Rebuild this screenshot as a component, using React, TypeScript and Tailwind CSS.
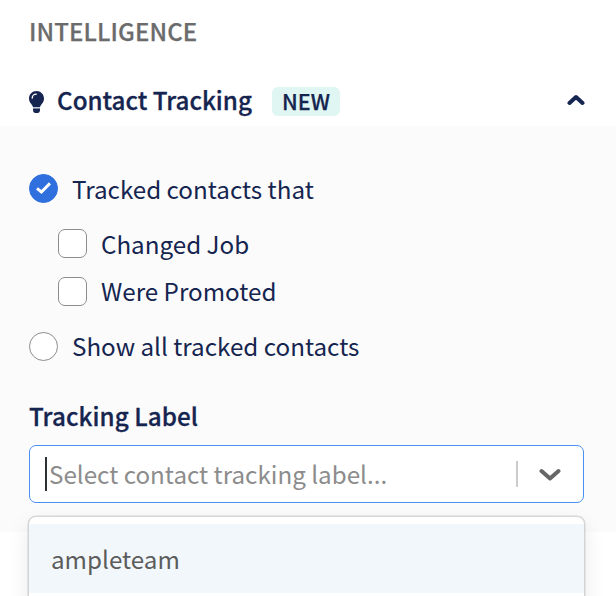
import { useState } from 'react';

interface OptionProps {
  label: string;
  shape: 'circle' | 'square';
  checked: boolean;
  onClick: () => void;
  labelClass?: string;
}

function Option({ label, shape, checked, onClick, labelClass = '' }: OptionProps) {
  return (
    <button onClick={onClick} className="flex h-[29px] items-center gap-3.5 text-left">
      <span
        className={`flex size-[29px] shrink-0 items-center justify-center border ${
          shape === 'circle' ? 'rounded-full' : 'rounded-[7px]'
        } ${checked ? 'border-[#2f6fde] bg-[#2f6fde]' : 'border-[#8c8c8c] bg-white'}`}
      >
        {checked && (
          <svg width="15" height="13" viewBox="0 0 15 13" fill="none">
            <path d="M1 6.4L5.4 10L14 1.4" stroke="white" strokeWidth="3" />
          </svg>
        )}
      </span>
      <span className={`whitespace-nowrap ${labelClass}`}>{label}</span>
    </button>
  );
}

function BulbIcon() {
  return (
    <svg width="15" height="22" viewBox="0 0 15 22" fill="none">
      <path
        d="M7.5 0C3.3 0 0 3.3 0 7.4C0 9.4.7 11 1.9 12.4C2.8 13.5 3.6 14.6 4 16H11C11.4 14.6 12.2 13.5 13.1 12.4C14.3 11 15 9.4 15 7.4C15 3.3 11.7 0 7.5 0Z"
        fill="#152550"
      />
      <path d="M3.2 7.2C3.2 4.9 5 3.2 7.3 3.2" stroke="white" strokeWidth="1.3" strokeLinecap="round" />
      <path d="M4 16H11V17.6H4Z" fill="#c3c9d8" />
      <path d="M4 17.6H11V19C11 20.7 10 22 8.6 22H6.4C5 22 4 20.7 4 19Z" fill="#152550" />
    </svg>
  );
}

export default function App() {
  const [mode, setMode] = useState('filtered');
  const [changedJob, setChangedJob] = useState(false);
  const [promoted, setPromoted] = useState(false);

  return (
    <div className="h-[596px] w-[616px] overflow-hidden bg-white font-['Noto_Sans_CJK_SC',sans-serif] text-[24.2px] leading-[29px] text-[#152550]">
      <header className="flex h-[126px] flex-col pr-[31px] pl-[29px]">
        <h2 className="mt-4 text-[24px] leading-[29px] font-medium tracking-[0.1px] text-[#6b6b6b] [-webkit-text-stroke:0.25px]">
          INTELLIGENCE
        </h2>
        <div className="mt-[42px] flex h-[29px] items-center">
          <BulbIcon />
          <h3 className="ml-[13px] w-[215px] pb-1 font-medium whitespace-nowrap [-webkit-text-stroke:0.3px]">
            Contact Tracking
          </h3>
          <span className="flex h-[29px] w-[68px] items-center justify-center rounded-md bg-[#e0f6f2] pb-[3px] text-[21.5px] font-medium [-webkit-text-stroke:0.25px]">
            NEW
          </span>
          <svg className="mb-1 ml-auto" width="18" height="12" viewBox="0 0 18 12" fill="none">
            <path d="M2.5 9L9 3L15.5 9" stroke="#152550" strokeWidth="4" strokeLinecap="round" strokeLinejoin="round" />
          </svg>
        </div>
      </header>

      <section className="h-[406px] bg-[#fbfbfb] px-[29px] pt-12">
        <Option
          label="Tracked contacts that"
          shape="circle"
          checked={mode === 'filtered'}
          onClick={() => setMode('filtered')}
        />
        <div className="mt-[26px] ml-[29px] flex flex-col gap-[19px]">
          <Option
            label="Changed Job"
            shape="square"
            checked={changedJob}
            onClick={() => setChangedJob(!changedJob)}
          />
          <Option
            label="Were Promoted"
            shape="square"
            checked={promoted}
            onClick={() => setPromoted(!promoted)}
            labelClass="pb-0.5"
          />
        </div>
        <div className="mt-[26px]">
          <Option
            label="Show all tracked contacts"
            shape="circle"
            checked={mode === 'all'}
            onClick={() => setMode('all')}
            labelClass="pb-0.5"
          />
        </div>

        <h4 className="mt-10 font-medium tracking-[0.07px] [-webkit-text-stroke:0.3px]">Tracking Label</h4>
        <div className="relative mt-[15px] w-[555px]">
          <div className="flex h-[58px] items-center rounded-[7px] border border-[#4a90ee] bg-white pl-[15px]">
            <span className="h-[34px] w-0.5 bg-[#2b2f36]" />
            <span className="ml-0.5 flex-1 pb-0.5 whitespace-nowrap text-[#8c8c8c]">
              Select contact tracking label...
            </span>
            <span className="h-[26px] w-0.5 bg-[#cccccc]" />
            <svg className="mr-[22px] ml-[21px]" width="22" height="14" viewBox="0 0 22 14" fill="none">
              <path d="M2.5 4L11 11.5L19.5 4" stroke="#666666" strokeWidth="4" strokeLinecap="round" strokeLinejoin="round" />
            </svg>
          </div>
          <ul className="absolute top-[72px] left-0 w-[555px] rounded-[7px] bg-white pt-[7px] pb-2 shadow-[0_0_0_1.5px_rgba(0,0,0,0.13),0_8px_22px_rgba(0,0,0,0.1)]">
            <li className="flex h-[69px] items-center bg-[#f2f7fb] pl-[22px] text-[#5c5c5c]">ampleteam</li>
            <li className="flex h-[69px] items-center pl-[22px]" />
          </ul>
        </div>
      </section>
    </div>
  );
}
